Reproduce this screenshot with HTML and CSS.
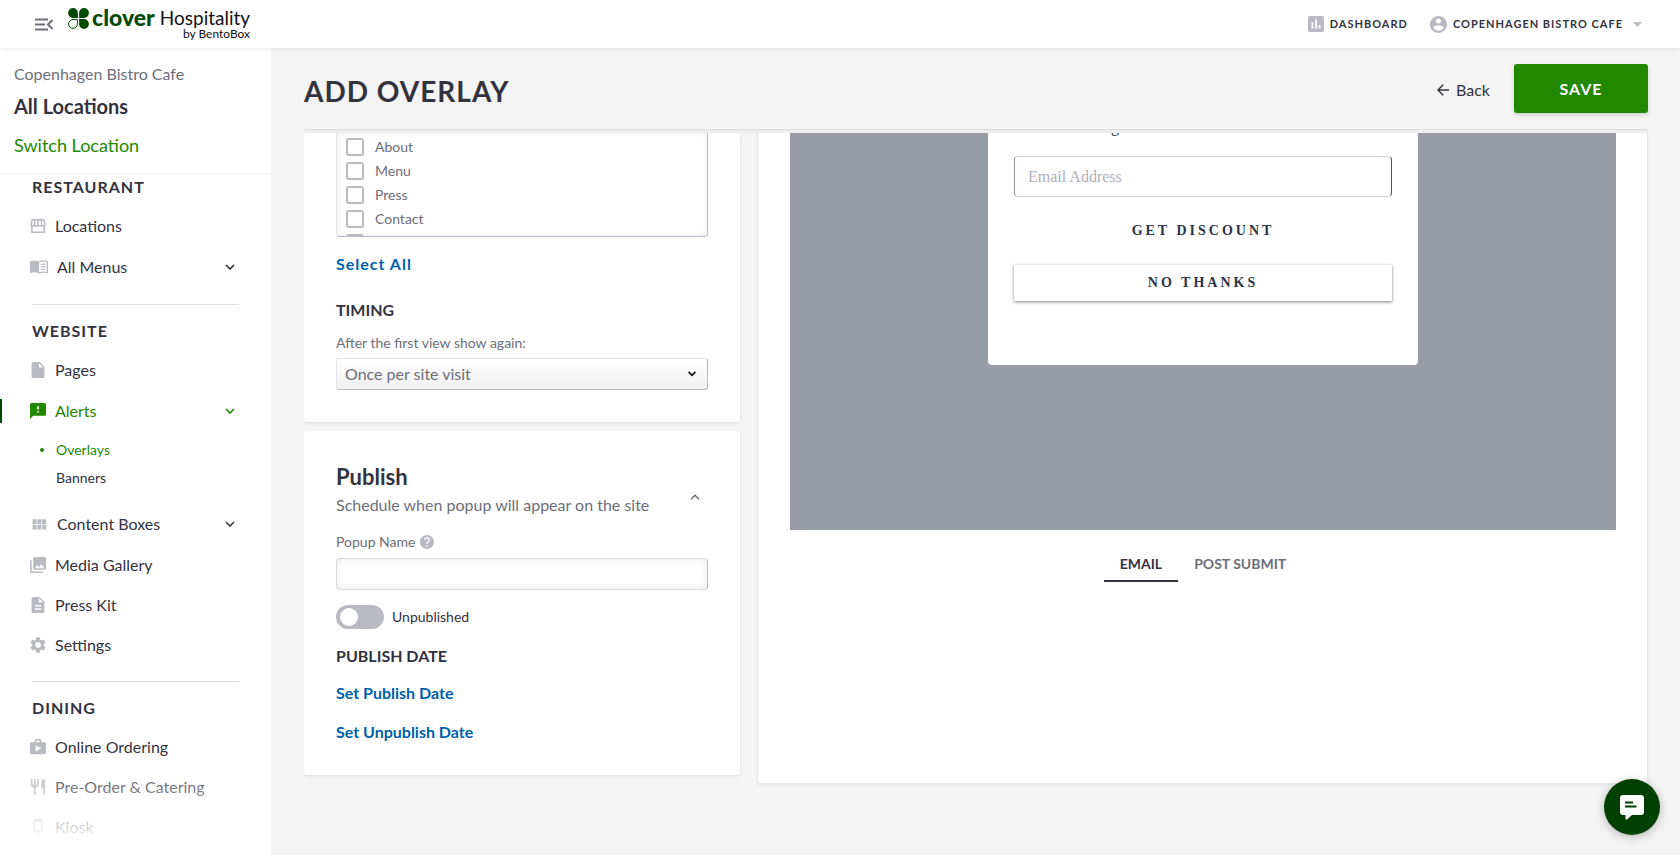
FILE: index.html
```html
<!DOCTYPE html>
<html lang="en">
<head>
<meta charset="utf-8">
<meta name="viewport" content="width=device-width, initial-scale=1">
<title>Add Overlay</title>
<link rel="stylesheet" href="styles.css">
</head>
<body>
<header class="topbar">
  <button class="icon-button menu-toggle" type="button" aria-label="Collapse menu">
    <svg width="18" height="13" viewBox="0 0 18 13" fill="none" stroke="#6d6e78" stroke-width="2"><path d="M0 1.500h13M0 6.500h10M0 11.500h13M17.500 2l-4.500 4.500 4.500 4.500"/></svg>
  </button>
  <a class="logo" href="#" aria-label="Clover Hospitality by BentoBox">
    <svg width="21" height="21" viewBox="0 0 21 21" fill="#004a00"><path d="M9.900 9.900H5A4.900 4.900 0 1 1 9.900 5zM11.100 9.900V5A4.900 4.900 0 1 1 16 9.900zM11.100 11.100H16A4.900 4.900 0 1 1 11.100 16z"/><path d="M9.400 11.600V16A4.400 4.400 0 1 1 5 11.600z" fill="none" stroke="#004a00" stroke-width="1"/></svg>
    <span class="logo-brand">clover</span>
    <span class="logo-product"><span class="logo-name">Hospitality</span><span class="logo-by">by BentoBox</span></span>
  </a>
  <nav class="topnav" aria-label="Account">
    <a class="topnav-link" href="#">
      <svg width="16" height="16" viewBox="3 3 18 18" fill="#b9bac2"><path d="M19 3H5c-1.100 0-2 .9-2 2v14c0 1.100.9 2 2 2h14c1.100 0 2-.9 2-2V5c0-1.100-.9-2-2-2zM9 17H7v-7h2v7zm4 0h-2V7h2v10zm4 0h-2v-4h2v4z"/></svg>
      Dashboard</a>
    <button class="topnav-link account" type="button">
      <svg width="17" height="17" viewBox="2 2 20 20" fill="#b9bac2"><path d="M12 2C6.480 2 2 6.480 2 12s4.480 10 10 10 10-4.480 10-10S17.520 2 12 2zm0 3c1.660 0 3 1.340 3 3s-1.340 3-3 3-3-1.340-3-3 1.340-3 3-3zm0 14.200c-2.500 0-4.710-1.280-6-3.220.03-1.990 4-3.080 6-3.080 1.990 0 5.970 1.090 6 3.080-1.290 1.940-3.500 3.220-6 3.220z"/></svg>
      Copenhagen Bistro Cafe
      <svg class="account-caret" width="9" height="5" viewBox="0 0 9 5" fill="#b9bac2"><path d="M0 0h9L4.500 5z"/></svg>
    </button>
  </nav>
</header>

<div class="layout">
  <aside class="sidebar">
    <div class="location">
      <p class="location-group">Copenhagen Bistro Cafe</p>
      <p class="location-name">All Locations</p>
      <a class="location-switch" href="#">Switch Location</a>
    </div>
    <nav class="nav" aria-label="Main">
      <section class="nav-section">
        <h2 class="nav-title">Restaurant</h2>
        <ul class="nav-list">
          <li><a class="nav-link" href="#"><svg width="16" height="16" viewBox="0 0 16 16" fill="none" stroke="#b9bac2" stroke-width="1.500"><path d="M2.200 1.800h11.600l1.200 4.700c0 .8-.6 1.500-1.500 1.500S11.700 7.300 11.700 6.500c0 .8-.8 1.500-1.800 1.500S8 7.300 8 6.500C8 7.300 7.100 8 6.100 8s-1.800-.7-1.800-1.500C4.300 7.300 3.400 8 2.500 8S1 7.300 1 6.500zM4.800 2l-.5 4.500M8 2v4.500M11.200 2l.5 4.500M1.900 8v6.200h12.200V8"/></svg>Locations</a></li>
          <li><a class="nav-link has-menu" href="#"><svg width="18" height="16" viewBox="0 0 18 16" fill="#b9bac2"><path d="M0 2.500C3 1 6.500 1.200 9 2.700v11.800c-2.500-1.400-6-1.500-9-.3z"/><path d="M9 3.200c2.500-1.500 5.500-1.600 8.300-.5v11c-2.800-.9-5.800-.8-8.300.5" fill="none" stroke="#b9bac2" stroke-width="1.300"/><path d="M10.800 5.600c1.500-.5 3-.6 4.700-.3M10.800 8.100c1.500-.5 3-.6 4.700-.3M10.800 10.600c1.500-.5 3-.6 4.700-.3" fill="none" stroke="#b9bac2" stroke-width="1.100"/></svg>All Menus<svg class="nav-chevron" width="10" height="6" viewBox="0 0 10 6"><path d="M1 1l4 4 4-4"/></svg></a></li>
        </ul>
      </section>
      <section class="nav-section">
        <h2 class="nav-title">Website</h2>
        <ul class="nav-list">
          <li><a class="nav-link" href="#"><svg width="16" height="16" viewBox="2 2 20 20" fill="#b9bac2"><path d="M6 2c-1.100 0-1.990.9-1.990 2L4 20c0 1.100.89 2 1.990 2H18c1.100 0 2-.9 2-2V8l-6-6H6zm7 7V3.500L18.500 9H13z"/></svg>Pages</a></li>
          <li><a class="nav-link has-menu is-active" href="#"><svg width="16" height="16" viewBox="2 2 20 20" fill="#228800"><path d="M20 2H4c-1.100 0-1.990.9-1.990 2L2 22l4-4h14c1.100 0 2-.9 2-2V4c0-1.100-.9-2-2-2zm-7 12h-2v-2h2v2zm0-4h-2V6h2v4z"/></svg>Alerts<svg class="nav-chevron" width="10" height="6" viewBox="0 0 10 6"><path d="M1 1l4 4 4-4"/></svg></a>
            <ul class="subnav">
              <li><a class="subnav-link is-current" href="#">Overlays</a></li>
              <li><a class="subnav-link" href="#">Banners</a></li>
            </ul>
          </li>
          <li><a class="nav-link has-menu" href="#"><svg width="18" height="16" viewBox="1 1 22 20" fill="#b9bac2"><path d="M4 11h5V5H4v6zm0 7h5v-6H4v6zm6 0h5v-6h-5v6zm6 0h5v-6h-5v6zm-6-7h5V5h-5v6zm6-6v6h5V5h-5z"/></svg>Content Boxes<svg class="nav-chevron" width="10" height="6" viewBox="0 0 10 6"><path d="M1 1l4 4 4-4"/></svg></a></li>
          <li><a class="nav-link" href="#"><svg width="16" height="16" viewBox="2 2 20 20" fill="#b9bac2"><path d="M22 16V4c0-1.100-.9-2-2-2H8c-1.100 0-2 .9-2 2v12c0 1.100.9 2 2 2h12c1.100 0 2-.9 2-2zm-11-4l2.030 2.710L16 11l4 5H8l3-4zM2 6v14c0 1.100.9 2 2 2h14v-2H4V6H2z"/></svg>Media Gallery</a></li>
          <li><a class="nav-link" href="#"><svg width="16" height="16" viewBox="2 2 20 20" fill="#b9bac2"><path d="M14 2H6c-1.100 0-1.990.9-1.990 2L4 20c0 1.100.89 2 1.990 2H18c1.100 0 2-.9 2-2V8l-6-6zm2 16H8v-2h8v2zm0-4H8v-2h8v2zm-3-5V3.500L18.500 9H13z"/></svg>Press Kit</a></li>
          <li><a class="nav-link" href="#"><svg width="16" height="16" viewBox="2 2 20 20" fill="#b9bac2"><path d="M19.140 12.940c.04-.3.060-.61.060-.94 0-.32-.02-.64-.07-.94l2.030-1.580c.18-.14.230-.41.120-.61l-1.920-3.320c-.12-.22-.37-.29-.59-.22l-2.390.96c-.5-.38-1.030-.7-1.620-.94l-.36-2.540c-.04-.24-.24-.41-.48-.41h-3.840c-.24 0-.43.170-.47.410l-.36 2.540c-.59.240-1.130.570-1.620.940l-2.390-.96c-.22-.08-.47 0-.59.220L2.740 8.870c-.12.210-.08.470.120.610l2.030 1.580c-.05.300-.09.630-.09.940s.02.640.070.940l-2.030 1.580c-.18.140-.23.410-.12.610l1.920 3.320c.12.220.37.290.59.220l2.390-.96c.5.380 1.030.7 1.620.94l.36 2.540c.05.240.24.410.48.410h3.840c.24 0 .44-.17.470-.41l.36-2.540c.59-.24 1.130-.56 1.620-.94l2.390.96c.22.080.47 0 .59-.22l1.920-3.320c.12-.22.070-.47-.12-.61l-2.010-1.580zM12 15.600c-1.980 0-3.600-1.620-3.600-3.600s1.620-3.600 3.600-3.600 3.600 1.620 3.600 3.600-1.620 3.600-3.600 3.600z"/></svg>Settings</a></li>
        </ul>
      </section>
      <section class="nav-section">
        <h2 class="nav-title">Dining</h2>
        <ul class="nav-list">
          <li><a class="nav-link" href="#"><svg width="16" height="16" viewBox="2 2 20 20" fill="#b9bac2"><path d="M20 6h-4V4c0-1.110-.89-2-2-2h-4c-1.110 0-2 .89-2 2v2H4c-1.110 0-2 .89-2 2v11c0 1.110.89 2 2 2h16c1.110 0 2-.89 2-2V8c0-1.110-.89-2-2-2zM10 4h4v2h-4V4zM9 17.500v-8l7.500 4z"/></svg>Online Ordering</a></li>
          <li><a class="nav-link" href="#"><svg width="16" height="16" viewBox="2 2 20 20" fill="#b9bac2"><path d="M11 9H9V2H7v7H5V2H3v7c0 2.120 1.660 3.840 3.750 3.970V22h2.500v-9.030C11.340 12.840 13 11.120 13 9V2h-2v7zm5-3v8h2.500v8H21V2c-2.760 0-5 2.240-5 4z"/></svg>Pre-Order &amp; Catering</a></li>
          <li><a class="nav-link" href="#"><svg width="16" height="18" viewBox="0 0 16 18" fill="#b9bac2"><path fill-rule="evenodd" d="M5 1h6c1 0 1.700.7 1.700 1.700v9.600c0 1-.7 1.700-1.700 1.700H5c-1 0-1.700-.7-1.700-1.700V2.700C3.300 1.700 4 1 5 1zm0 2.800v7.400c0 .5.300.8.800.8h4.400c.5 0 .8-.3.800-.8V3.800z"/><path d="M5 15.500h6V17H5z"/></svg>Kiosk</a></li>
        </ul>
      </section>
    </nav>
  </aside>

  <main class="main">
    <div class="page-head">
      <h1 class="page-title">Add Overlay</h1>
      <a class="back" href="#"><svg width="12" height="12" viewBox="0 0 12 12" fill="none" stroke="#33333f" stroke-width="1.400"><path d="M12 6H1M6.200.8L1 6l5.200 5.200"/></svg>Back</a>
      <button class="save" type="submit">Save</button>
    </div>

    <div class="columns">
      <form class="settings">
        <section class="card card-display">
          <div class="page-list">
            <label class="check"><input type="checkbox">About</label>
            <label class="check"><input type="checkbox">Menu</label>
            <label class="check"><input type="checkbox">Press</label>
            <label class="check"><input type="checkbox">Contact</label>
            <label class="check"><input type="checkbox" aria-label="More pages"></label>
          </div>
          <button class="text-button select-all" type="button">Select All</button>
          <h3 class="group-title">Timing</h3>
          <label class="field-label" for="timing">After the first view show again:</label>
          <div class="select-wrap">
            <select class="select" id="timing"><option>Once per site visit</option></select>
            <svg class="select-caret" width="8" height="6" viewBox="0 0 8 6" fill="none" stroke="#111" stroke-width="1.800"><path d="M.6.8L4 4.300 7.400.8"/></svg>
          </div>
        </section>

        <section class="card card-publish">
          <div class="card-head">
            <div>
              <h2 class="card-title">Publish</h2>
              <p class="card-note">Schedule when popup will appear on the site</p>
            </div>
            <button class="icon-button card-toggle" type="button" aria-label="Collapse Publish">
              <svg width="10" height="6" viewBox="0 0 10 6" fill="none" stroke="#6d6e78" stroke-width="1.500"><path d="M1 5.300l4-4 4 4"/></svg>
            </button>
          </div>
          <div class="label-row">
            <label class="field-label" for="popup-name">Popup Name</label>
            <svg width="14" height="14" viewBox="2 2 20 20" fill="#b9bac2"><path d="M12 2C6.480 2 2 6.480 2 12s4.480 10 10 10 10-4.480 10-10S17.520 2 12 2zm1 17h-2v-2h2v2zm2.070-7.750l-.9.920C13.450 12.900 13 13.500 13 15h-2v-.5c0-1.100.45-2.100 1.170-2.830l1.240-1.260c.37-.36.590-.86.590-1.410 0-1.100-.9-2-2-2s-2 .9-2 2H8c0-2.210 1.790-4 4-4s4 1.790 4 4c0 .88-.36 1.680-.93 2.250z"/></svg>
          </div>
          <input class="text-input" id="popup-name" type="text">
          <label class="toggle"><input class="toggle-input" type="checkbox" role="switch">Unpublished</label>
          <h3 class="group-title">Publish Date</h3>
          <button class="text-button" type="button">Set Publish Date</button>
          <button class="text-button" type="button">Set Unpublish Date</button>
        </section>
      </form>

      <section class="preview" aria-label="Preview">
        <div class="stage">
          <div class="popup">
            <p class="popup-text">Join our mailing list to be the first to know about new deals</p>
            <input class="popup-input" type="email" placeholder="Email Address" aria-label="Email Address">
            <button class="popup-button" type="button">Get Discount</button>
            <button class="popup-button is-raised" type="button">No Thanks</button>
          </div>
        </div>
        <div class="tabs" role="tablist">
          <button class="tab is-selected" type="button" role="tab" aria-selected="true">Email</button>
          <button class="tab" type="button" role="tab" aria-selected="false">Post Submit</button>
        </div>
      </section>
    </div>
  </main>
</div>

<button class="chat" type="button" aria-label="Open chat">
  <svg width="24" height="26" viewBox="0 0 24 26"><path fill="#fff" d="M3 1h18c1.700 0 3 1.300 3 3v14c0 1.700-1.300 3-3 3H12l-5 4.500c-.8.300-1.500 0-1.500-.8V21H3c-1.700 0-3-1.300-3-3V4c0-1.700 1.300-3 3-3z"/><path d="M5 8.500h8M5 12.500h11.500" stroke="#004000" stroke-width="2.200"/></svg>
</button>
</body>
</html>
```
FILE: styles.css
```css
* {
  box-sizing: border-box;
}

body {
  display: flex;
  flex-direction: column;
  height: 100vh;
  margin: 0;
  overflow: hidden;
  background: #f4f4f4;
  color: #33333f;
  font: 16px/24px Lato, "Open Sans", sans-serif;
}

h1, h2, h3, p, ul {
  margin: 0;
  padding: 0;
}

ul {
  list-style: none;
}

a {
  color: inherit;
  text-decoration: none;
}

button, input, select {
  margin: 0;
  font: inherit;
  color: inherit;
}

button {
  padding: 0;
  border: 0;
  background: none;
  cursor: pointer;
}

svg {
  display: block;
  flex: none;
}

/* Top bar */
.topbar {
  display: flex;
  align-items: center;
  flex: none;
  height: 48px;
  padding: 0 38px 0 35px;
  background: #fff;
  box-shadow: 0 1px 4px rgba(0, 0, 0, 0.08);
  z-index: 2;
}

.logo {
  display: flex;
  align-items: flex-start;
  height: 32px;
  margin-left: 15px;
}

.logo-brand {
  margin-left: 3px;
  color: #004a00;
  font-size: 23px;
  font-weight: 900;
  line-height: 18px;
}

.logo-product {
  display: flex;
  flex-direction: column;
  align-items: flex-end;
  margin-left: 5px;
  color: #111;
}

.logo-name {
  font-size: 19px;
  line-height: 20px;
}

.logo-by {
  font-size: 12px;
  line-height: 12px;
}

.topnav {
  display: flex;
  gap: 22px;
  margin-left: auto;
}

.topnav-link {
  display: flex;
  align-items: center;
  gap: 6px;
  font-size: 11px;
  font-weight: 700;
  letter-spacing: 1px;
  text-transform: uppercase;
}

.account-caret {
  margin-left: 4px;
}

/* Sidebar */
.layout {
  display: flex;
  flex: 1;
  min-height: 0;
}

.sidebar {
  position: relative;
  flex: none;
  width: 271px;
  overflow: hidden;
  background: #fff;
}

.sidebar::after {
  content: "";
  position: absolute;
  inset: auto 0 0 0;
  height: 96px;
  background: linear-gradient(rgba(255, 255, 255, 0), #fff 90%);
  pointer-events: none;
}

.location {
  padding: 15px 14px 16px;
  border-bottom: 1px solid #f4f4f4;
}

.location-group {
  color: #6d6e78;
  line-height: 22px;
}

.location-name {
  margin: 7px 0 13px;
  font-size: 20px;
  font-weight: 700;
  line-height: 28px;
}

.location-switch {
  display: block;
  color: #228800;
  font-size: 18px;
}

.nav {
  padding: 3px 32px 0;
}

.nav-section + .nav-section {
  margin-top: 16px;
  padding-top: 16px;
  border-top: 1px solid #dfdfe3;
}

.nav-title {
  margin-bottom: 9px;
  font-size: 16px;
  letter-spacing: 1px;
  line-height: 20px;
  text-transform: uppercase;
}

.nav-link {
  display: flex;
  align-items: center;
  gap: 9px;
  height: 40px;
  margin-left: -2px;
}

.nav-link.has-menu {
  height: 42px;
}

.nav-link.is-active {
  margin-left: -32px;
  padding-left: 28px;
  border-left: 2px solid transparent;
  border-image: linear-gradient(transparent 10px, #004a00 10px, #004a00 32px, transparent 32px) 1;
  border-right: 0;
  color: #228800;
}

.nav-chevron {
  margin: 0 4px 0 auto;
  fill: none;
  stroke: currentColor;
  stroke-width: 1.6;
}

.subnav {
  padding: 4px 0 11px 24px;
}

.subnav-link {
  display: flex;
  align-items: center;
  height: 28px;
  font-size: 14px;
}

.subnav-link.is-current {
  gap: 12px;
  margin-left: -16px;
  color: #228800;
}

.subnav-link.is-current::before {
  content: "";
  width: 4px;
  height: 4px;
  border-radius: 50%;
  background: currentColor;
}

/* Page head */
.main {
  display: flex;
  flex-direction: column;
  flex: 1;
  min-width: 0;
  padding: 0 32px 0 33px;
}

.page-head {
  display: flex;
  align-items: center;
  flex: none;
  height: 82px;
  margin-bottom: 3px;
  border-bottom: 1px solid #dedede;
  box-shadow: 0 3px 0 #ededed;
}

.page-title {
  margin-right: auto;
  padding-top: 4px;
  font-size: 28px;
  letter-spacing: 1px;
  line-height: 36px;
  text-transform: uppercase;
}

.back {
  display: flex;
  align-items: center;
  gap: 7px;
  padding-top: 3px;
}

.save {
  width: 134px;
  height: 49px;
  margin-left: 24px;
  border-radius: 3px;
  background: #228800;
  box-shadow: 0 2px 4px rgba(0, 0, 0, 0.15);
  color: #fff;
  font-weight: 700;
  letter-spacing: 1px;
  text-transform: uppercase;
}

/* Columns */
.columns {
  display: grid;
  grid-template-columns: minmax(0, 436fr) minmax(0, 891fr);
  gap: 17px;
  flex: 1;
  min-height: 0;
  overflow: hidden;
  margin-right: -4px;
  padding-right: 4px;
}

.settings {
  display: flex;
  flex-direction: column;
  gap: 9px;
}

.card {
  display: flex;
  flex-direction: column;
  align-items: flex-start;
  padding: 32px;
  border-radius: 3px;
  background: #fff;
  box-shadow: 0 1px 3px rgba(0, 0, 0, 0.1);
}

.card-display {
  padding-top: 0;
}

.page-list {
  width: 100%;
  height: 104px;
  padding: 2px 9px 0;
  overflow: hidden;
  border: 1px solid #b9bac2;
  border-width: 0 1px 1px;
  border-left-color: #e4e4e8;
  border-radius: 0 0 4px 4px;
  box-shadow: inset 0 0 6px rgba(0, 0, 0, 0.08);
}

.check {
  display: flex;
  align-items: center;
  gap: 11px;
  height: 24px;
  color: #6d6e78;
  font-size: 14px;
}

.check input {
  appearance: none;
  width: 18px;
  height: 18px;
  border: 2px solid #b9bac2;
  border-radius: 3px;
  background: #fff;
}

.text-button {
  color: #0061ab;
  font-weight: 700;
}

.text-button + .text-button {
  margin-top: 15px;
}

.select-all {
  margin-top: 15px;
  letter-spacing: 1px;
}

.group-title {
  font-size: 16px;
  text-transform: uppercase;
}

.card-display .group-title {
  margin: 22px 0 11px;
}

.field-label {
  color: #6d6e78;
  font-size: 14px;
  line-height: 20px;
}

.select-wrap {
  position: relative;
  width: 100%;
  margin-top: 5px;
}

.select {
  appearance: none;
  display: block;
  width: 100%;
  height: 32px;
  padding: 0 8px;
  border: 1px solid #c8c8ce;
  border-color: #e4e4e8 #b9bac2 #b9bac2 #e4e4e8;
  border-radius: 3px;
  background: linear-gradient(#fff, #f0f0f1);
  color: #6d6e78;
}

.select-caret {
  position: absolute;
  top: 13px;
  right: 12px;
  pointer-events: none;
}

.card-head {
  display: flex;
  align-items: center;
  justify-content: space-between;
  width: 100%;
  padding-right: 8px;
}

.card-toggle {
  padding-top: 14px;
}

.card-title {
  font-size: 22px;
  font-weight: 700;
  line-height: 28px;
}

.card-note {
  margin-top: 2px;
  color: #6d6e78;
}

.label-row {
  display: flex;
  align-items: center;
  gap: 5px;
  margin-top: 15px;
}

.text-input {
  width: 100%;
  height: 32px;
  margin-top: 6px;
  padding: 0 8px;
  border: 1px solid #dcdce0;
  border-right-color: #b9bac2;
  border-radius: 4px;
  box-shadow: inset 0 0 6px rgba(0, 0, 0, 0.1);
}

.toggle {
  display: flex;
  align-items: center;
  gap: 8px;
  margin: 15px 0;
  font-size: 14px;
}

.toggle-input {
  appearance: none;
  display: flex;
  width: 48px;
  height: 24px;
  padding: 3px 4px;
  border-radius: 12px;
  background: #b9bac2;
}

.toggle-input::before {
  content: "";
  width: 18px;
  height: 18px;
  border-radius: 50%;
  background: #fff;
}

.card-publish .group-title {
  margin-bottom: 13px;
}

.card-publish {
  padding-bottom: 31px;
}

/* Preview */
.preview {
  align-self: start;
  height: 651px;
  padding: 0 31px 0 32px;
  border: 1px solid #e6e6e6;
  border-top: 0;
  border-radius: 0 0 3px 3px;
  background: #fff;
  box-shadow: 0 1px 3px rgba(0, 0, 0, 0.06);
}

.stage {
  height: 397px;
  overflow: hidden;
  background: #999da6;
}

.popup {
  display: flex;
  flex-direction: column;
  max-width: 430px;
  height: 232px;
  margin: 0 auto;
  padding: 0 26px;
  border-radius: 0 0 4px 4px;
  background: #fff;
  color: #2d3348;
  font-family: "Liberation Serif", serif;
}

.popup-text {
  height: 25px;
  margin-top: -18px;
  line-height: 24px;
  text-align: center;
  white-space: nowrap;
}

.popup-input {
  height: 41px;
  margin-top: 16px;
  padding: 0 13px;
  border: 1px solid #cfd1d8;
  border-right-color: #4d5266;
  border-left-color: #8d909c;
  border-radius: 4px;
}

.popup-input::placeholder {
  color: #b0b1ba;
}

.popup-button {
  height: 36px;
  margin-top: 16px;
  font-size: 14px;
  font-weight: 700;
  letter-spacing: 3px;
  text-transform: uppercase;
}

.popup-button.is-raised {
  box-shadow: 0 1px 3px rgba(0, 0, 0, 0.5);
}

.tabs {
  display: flex;
  justify-content: center;
  margin-top: 16px;
}

.tab {
  height: 36px;
  padding: 2px 16px 0;
  border-bottom: 2px solid transparent;
  color: #6d6e78;
  font-size: 14px;
  font-weight: 700;
  text-transform: uppercase;
}

.tab.is-selected {
  border-bottom-color: #33333f;
  color: #33333f;
}

/* Chat launcher floats over the page */
.chat {
  position: fixed;
  right: 20px;
  bottom: 20px;
  display: flex;
  align-items: center;
  justify-content: center;
  width: 56px;
  height: 56px;
  border-radius: 50%;
  background: #004000;
  box-shadow: 0 2px 10px rgba(0, 0, 0, 0.25);
}
```
